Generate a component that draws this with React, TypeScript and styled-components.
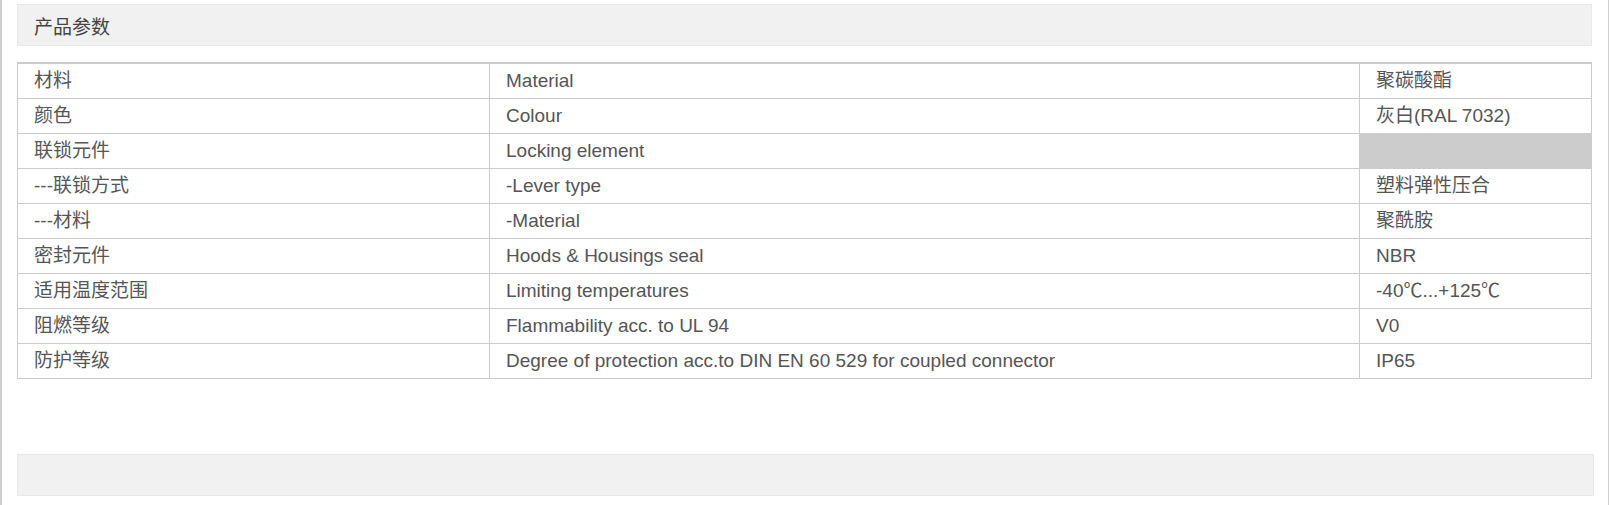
import React from 'react';
import styled, { createGlobalStyle } from 'styled-components';

const GlobalStyle = createGlobalStyle`
  html, body {
    margin: 0;
    padding: 0;
    background: #fff;
  }
  body {
    font-family: "Liberation Sans", Arial, "Noto Sans CJK SC", sans-serif;
  }
`;

const Panel = styled.div`
  box-sizing: border-box;
  width: 1609px;
  height: 505px;
  padding: 4px 16px 0 15px;
  border-left: 2px solid #cfcfcf;
  border-right: 1px solid #cfcfcf;
  display: flex;
  flex-direction: column;
`;

const SectionHeader = styled.div`
  box-sizing: border-box;
  height: 42px;
  display: flex;
  align-items: center;
  padding-left: 16px;
  background: #f1f1f1;
  border: 1px solid #e9e9e9;
  color: #444;
  font-size: 19px;
`;

const ParamTable = styled.table`
  margin-top: 16px;
  width: 100%;
  border-collapse: collapse;
  table-layout: fixed;
  border-top: 2px solid #cccccc;
  font-size: 19px;
  color: #555;
`;

const Cell = styled.td<{ $blank?: boolean }>`
  box-sizing: border-box;
  height: 35px;
  padding: 0 16px;
  border: 1px solid #cccccc;
  line-height: 22px;
  vertical-align: middle;
  white-space: nowrap;
  background: ${(p) => (p.$blank ? '#cccccc' : '#fff')};
`;

const FooterBar = styled.div`
  box-sizing: border-box;
  margin-top: 75px;
  margin-right: -2px;
  height: 42px;
  background: #f1f1f1;
  border: 1px solid #e9e9e9;
`;

const rows: [string, string, string][] = [
  ['材料', 'Material', '聚碳酸酯'],
  ['颜色', 'Colour', '灰白(RAL 7032)'],
  ['联锁元件', 'Locking element', ''],
  ['---联锁方式', '-Lever type', '塑料弹性压合'],
  ['---材料', '-Material', '聚酰胺'],
  ['密封元件', 'Hoods & Housings seal', 'NBR'],
  ['适用温度范围', 'Limiting temperatures', '-40℃...+125℃'],
  ['阻燃等级', 'Flammability acc. to UL 94', 'V0'],
  ['防护等级', 'Degree of protection acc.to DIN EN 60 529 for coupled connector', 'IP65'],
];

const App: React.FC = () => {
  return (
    <>
      <GlobalStyle />
      <Panel>
        <SectionHeader>产品参数</SectionHeader>
        <ParamTable>
          <colgroup>
            <col style={{ width: 472 }} />
            <col style={{ width: 870 }} />
            <col />
          </colgroup>
          <tbody>
            {rows.map(([cn, en, value]) => (
              <tr key={cn + en}>
                <Cell>{cn}</Cell>
                <Cell>{en}</Cell>
                <Cell $blank={value === ''}>{value}</Cell>
              </tr>
            ))}
          </tbody>
        </ParamTable>
        <FooterBar />
      </Panel>
    </>
  );
};

export default App;
